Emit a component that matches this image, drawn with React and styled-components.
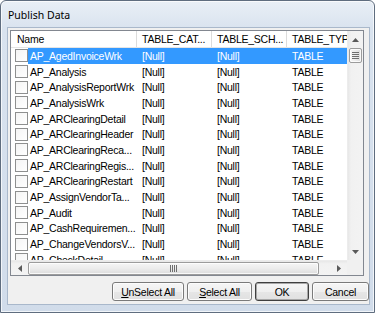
import React from "react";
import styled, { createGlobalStyle, css } from "styled-components";

const Global = createGlobalStyle`
  html, body { margin: 0; padding: 0; background: #ffffff; }
  body { width: 375px; height: 313px; overflow: hidden; }
  * { box-sizing: border-box; }
`;

const Window = styled.div`
  width: 375px;
  height: 313px;
  border: 1px solid #5f6d7f;
  border-radius: 6px 6px 0 0;
  background: linear-gradient(180deg, #e9eff6 0%, #d9e3ef 28px, #d1dcea 100%);
  box-shadow: inset 0 0 0 1px rgba(255, 255, 255, 0.7);
  display: flex;
  flex-direction: column;
  padding: 0 4px 7px 6px;
`;

const TitleBar = styled.div`
  height: 26px;
  display: flex;
  align-items: center;
  padding: 1px 0 0 1px;
  font-family: "Noto Sans", "Liberation Sans", sans-serif;
  font-size: 10.5px;
  color: #000;
`;

const Client = styled.div`
  flex: 1;
  background: #f0f0f0;
  border: 1px solid #a9b8cb;
  display: flex;
  flex-direction: column;
  padding: 2px 0 0 2px;
  font-family: "Liberation Sans", Arial, sans-serif;
  font-size: 10.5px;
  letter-spacing: -0.25px;
  color: #000;
`;

const List = styled.div`
  height: 246px;
  margin-right: 5px;
  border: 1px solid #828790;
  background: #fff;
  display: grid;
  grid-template-columns: 1fr 16px;
  grid-template-rows: 1fr 15px;
`;

const Viewport = styled.div`
  overflow: hidden;
  min-width: 0;
  min-height: 0;
`;

const Header = styled.div`
  display: flex;
  height: 17px;
  border-bottom: 1px solid #e5e5e5;
  width: 351px;
`;

const HeaderCell = styled.div`
  flex: none;
  width: ${(p) => p.$w}px;
  padding-left: ${(p) => p.$pad}px;
  border-right: 1px solid #dcdcdc;
  display: flex;
  align-items: center;
  white-space: nowrap;
  overflow: hidden;
`;

const Row = styled.div`
  display: flex;
  height: 15.7px;
  width: 351px;
  align-items: center;
`;

const CheckCell = styled.div`
  flex: none;
  width: 17px;
  height: 100%;
  padding-left: 4px;
  display: flex;
  align-items: center;
`;

const Check = styled.span`
  display: block;
  width: 13px;
  height: 13px;
  border: 1px solid #8e8f8f;
  background: linear-gradient(135deg, #f4f4f4 0%, #ffffff 100%);
`;

const RowBody = styled.div`
  flex: 1;
  height: 100%;
  display: flex;
  align-items: center;
  ${(p) =>
    p.$selected &&
    css`
      background: #3399ff;
      color: #fff;
    `}
`;

const Cell = styled.div`
  flex: none;
  width: ${(p) => p.$w}px;
  padding-left: ${(p) => p.$pad}px;
  white-space: nowrap;
  overflow: hidden;
`;

const VScroll = styled.div`
  display: flex;
  flex-direction: column;
  background: linear-gradient(90deg, #e7e7e7 0%, #f1f1f1 20%, #f3f3f3 100%);
  border-left: 1px solid #ececec;
`;

const HScroll = styled.div`
  display: flex;
  background: linear-gradient(180deg, #e7e7e7 0%, #f1f1f1 20%, #f3f3f3 100%);
  border-top: 1px solid #ececec;
`;

const Corner = styled.div`
  background: #f0f0f0;
`;

const ArrowBtn = styled.div`
  flex: none;
  width: ${(p) => (p.$horizontal ? "17px" : "100%")};
  height: ${(p) => (p.$horizontal ? "100%" : "17px")};
  display: flex;
  align-items: center;
  justify-content: center;
`;

const Spacer = styled.div`
  flex: ${(p) => (p.$size ? "none" : "1")};
  width: ${(p) => (p.$size ? `${p.$size}px` : "auto")};
`;

const Thumb = styled.div`
  flex: ${(p) => (p.$horizontal ? "1" : "none")};
  ${(p) =>
    p.$horizontal
      ? css`
          height: 13px;
          margin: 1px 0;
          background: linear-gradient(180deg, #f6f6f6 0%, #ececec 50%, #dcdcdc 100%);
        `
      : css`
          height: 15px;
          margin: 0 1px;
          background: linear-gradient(90deg, #f6f6f6 0%, #ececec 50%, #dcdcdc 100%);
        `}
  border: 1px solid #9c9c9c;
  border-radius: 2px;
  display: flex;
  align-items: center;
  justify-content: center;
  box-shadow: inset 0 0 0 1px rgba(255, 255, 255, 0.8);
`;

const ButtonRow = styled.div`
  margin-top: 6px;
  height: 19px;
  display: flex;
  justify-content: flex-end;
  gap: 3px;
`;

const Button = styled.button`
  width: ${(p) => p.$w}px;
  height: 19px;
  padding: 0;
  font: inherit;
  letter-spacing: inherit;
  color: #000;
  border: 1px solid ${(p) => (p.$default ? "#3f3f3f" : "#7a7a7a")};
  border-radius: 3px;
  background: linear-gradient(180deg, #f6f6f6 0%, #efefef 50%, #e6e6e6 51%, #e0e0e0 100%);
  box-shadow: inset 0 0 0 1px ${(p) => (p.$default ? "#a8a8a8" : "#fcfcfc")};
  display: flex;
  align-items: center;
  justify-content: center;
  u { text-decoration: underline; }
`;

const Arrow = ({ dir }) => {
  const pts = {
    up: "0,4 3.5,0 7,4",
    down: "0,0 7,0 3.5,4",
    left: "4,0 4,7 0,3.5",
    right: "0,0 0,7 4,3.5",
  }[dir];
  const horiz = dir === "left" || dir === "right";
  return (
    <svg width={horiz ? 4 : 7} height={horiz ? 7 : 4} viewBox={horiz ? "0 0 4 7" : "0 0 7 4"}>
      <polygon points={pts} fill="#5a5a5a" />
    </svg>
  );
};

const Grip = ({ horizontal }) =>
  horizontal ? (
    <svg width="7" height="7" viewBox="0 0 7 7">
      {[0, 2, 4, 6].map((x) => (
        <rect key={x} x={x} y="0" width="1" height="7" fill="#6e6e6e" />
      ))}
    </svg>
  ) : (
    <svg width="7" height="7" viewBox="0 0 7 7">
      {[0, 2, 4, 6].map((y) => (
        <rect key={y} x="0" y={y} width="7" height="1" fill="#6e6e6e" />
      ))}
    </svg>
  );

const names = [
  "AP_AgedInvoiceWrk",
  "AP_Analysis",
  "AP_AnalysisReportWrk",
  "AP_AnalysisWrk",
  "AP_ARClearingDetail",
  "AP_ARClearingHeader",
  "AP_ARClearingReca...",
  "AP_ARClearingRegis...",
  "AP_ARClearingRestart",
  "AP_AssignVendorTa...",
  "AP_Audit",
  "AP_CashRequiremen...",
  "AP_ChangeVendorsV...",
  "AP_CheckDetail",
];

export default function App() {
  return (
    <>
      <Global />
      <Window>
        <TitleBar>Publish Data</TitleBar>
        <Client>
          <List>
            <Viewport>
              <Header>
                <HeaderCell $w={126} $pad={6}>Name</HeaderCell>
                <HeaderCell $w={75} $pad={5}>TABLE_CAT...</HeaderCell>
                <HeaderCell $w={75} $pad={5}>TABLE_SCH...</HeaderCell>
                <HeaderCell $w={75} $pad={5}>TABLE_TYPE</HeaderCell>
              </Header>
              {names.map((n, i) => (
                <Row key={n}>
                  <CheckCell>
                    <Check />
                  </CheckCell>
                  <RowBody $selected={i === 0}>
                    <Cell $w={109} $pad={2}>{n}</Cell>
                    <Cell $w={75} $pad={5}>[Null]</Cell>
                    <Cell $w={75} $pad={5}>[Null]</Cell>
                    <Cell $w={75} $pad={5}>TABLE</Cell>
                  </RowBody>
                </Row>
              ))}
            </Viewport>
            <VScroll>
              <ArrowBtn>
                <Arrow dir="up" />
              </ArrowBtn>
              <Thumb>
                <Grip />
              </Thumb>
              <Spacer />
              <ArrowBtn>
                <Arrow dir="down" />
              </ArrowBtn>
            </VScroll>
            <HScroll>
              <ArrowBtn $horizontal>
                <Arrow dir="left" />
              </ArrowBtn>
              <Thumb $horizontal>
                <Grip horizontal />
              </Thumb>
              <Spacer $size={11} />
              <ArrowBtn $horizontal>
                <Arrow dir="right" />
              </ArrowBtn>
            </HScroll>
            <Corner />
          </List>
          <ButtonRow>
            <Button $w={72}>
              <u>U</u>nSelect All
            </Button>
            <Button $w={65}>
              <u>S</u>elect All
            </Button>
            <Button $w={54} $default>
              OK
            </Button>
            <Button $w={57}>Cancel</Button>
          </ButtonRow>
        </Client>
      </Window>
    </>
  );
}
